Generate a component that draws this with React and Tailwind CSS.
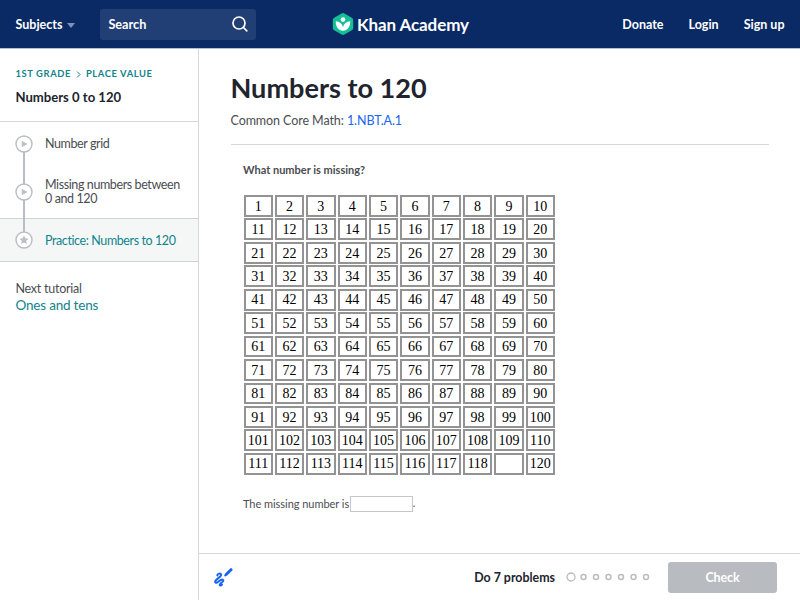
import React from 'react';

const numbers = Array.from({ length: 120 }, (_, i) => i + 1);
const MISSING = 119;

const lessons = [
  { title: 'Number grid', type: 'video', row: 'h-[43px]' },
  { title: 'Missing numbers between 0 and 120', type: 'video', row: 'h-[53px]' },
  { title: 'Practice: Numbers to 120', type: 'exercise', row: 'h-[44px]', active: true },
];

const Logo = () => (
  <svg width="22" height="24" viewBox="0 0 22 24" className="shrink-0">
    <path d="M9.6 1.4a2.8 2.8 0 0 1 2.8 0l7.4 4.3a2.8 2.8 0 0 1 1.4 2.4v7.8a2.8 2.8 0 0 1-1.4 2.4l-7.4 4.3a2.8 2.8 0 0 1-2.8 0l-7.4-4.3A2.8 2.8 0 0 1 .8 15.9V8.1a2.8 2.8 0 0 1 1.4-2.4z" fill="#14bf96" />
    <circle cx="11" cy="7.6" r="2.3" fill="#fff" />
    <path d="M18.200 9.300c-4 .3-6.300 2.600-7.200 5.700-.9-3.100-3.200-5.400-7.200-5.700-.3 5.300 2.600 9.400 7.200 9.400s7.500-4.100 7.200-9.400z" fill="#fff" />
  </svg>
);

const LessonIcon = ({ type }) => (
  <svg width="18" height="18" viewBox="0 0 18 18" className="block">
    <circle cx="9" cy="9" r="8" fill="#fff" stroke="#babec2" strokeWidth="1.400" />
    {type === 'video' ? (
      <path d="M7.200 6.500v5L11.800 9z" fill="#babec2" stroke="#babec2" strokeWidth="0.800" strokeLinejoin="round" />
    ) : (
      <path d="M9 5l1.200 2.600 2.800.3-2.100 1.900.6 2.800L9 11.200l-2.500 1.400.6-2.800L5 7.900l2.800-.3z" fill="#babec2" stroke="#babec2" strokeWidth="0.500" />
    )}
  </svg>
);

const Header = () => (
  <header className="flex h-[49px] shrink-0 items-center justify-between border-b border-[#b5bdd1] bg-[#0a2a66] text-white">
    <div className="flex w-[332px] items-center pl-[15.500px]">
      <span className="pt-[2px] text-[12.500px] font-bold">Subjects</span>
      <svg width="8" height="5" viewBox="0 0 8 5" className="ml-[5px] mt-0.5"><path d="M0 0h8L4 5z" fill="#7e93bb" /></svg>
      <div className="ml-[25px] flex h-[31px] w-[156px] items-center justify-between rounded-[3px] bg-[#223f75] px-2">
        <span className="pt-px text-[12.700px] font-bold">Search</span>
        <svg width="16" height="16" viewBox="0 0 16 16" fill="none" stroke="#fff" strokeWidth="1.700" strokeLinecap="round">
          <circle cx="7" cy="7" r="6" />
          <path d="M11.500 11.500l3.300 3.300" />
        </svg>
      </div>
    </div>
    <div className="flex flex-1 items-center gap-[3px]">
      <Logo />
      <span className="pt-px text-[17px] font-bold tracking-[-0.1px]">Khan Academy</span>
    </div>
    <nav className="flex gap-[25px] pr-[15.500px] pt-[2px] text-[12.500px] font-bold">
      <span>Donate</span>
      <span>Login</span>
      <span>Sign up</span>
    </nav>
  </header>
);

const Sidebar = () => (
  <aside className="w-[199px] shrink-0 border-r border-[#d6d8da] text-[#4a4d52]">
    <div className="h-[73px] border-b border-[#d6d8da] pl-[15.5px] pt-[18px]">
      <div className="flex items-center text-[9.400px] leading-[14px] font-bold tracking-[0.6px] text-[#11848c]">
        <span>1ST GRADE</span>
        <svg width="5" height="7" viewBox="0 0 5 7" className="mx-[5px]" fill="none" stroke="#11848c" strokeWidth="1"><path d="M1 .5l3 3-3 3" /></svg>
        <span>PLACE VALUE</span>
      </div>
      <h2 className="mt-[7px] text-[13.100px] leading-[18px] font-bold text-[#21242c]">Numbers 0 to 120</h2>
    </div>
    <ul className="relative">
      <li className="absolute left-[23px] top-[22px] h-[97px] w-[1.500px] bg-[#babec2]" />
      {lessons.map((lesson) => (
        <li
          key={lesson.title}
          className={`flex items-center pl-[15px] ${lesson.row} ${lesson.active ? 'border-y border-[#d0d3d3] bg-[#f5f7f7] text-[#11848c]' : ''}`}
        >
          <div className="relative"><LessonIcon type={lesson.type} /></div>
          <span className="ml-3 w-[142px] pt-px text-[12.500px] leading-[14px] tracking-[-0.400px]">{lesson.title}</span>
        </li>
      ))}
    </ul>
    <div className="pl-[15.5px] pt-[18px]">
      <p className="text-[12.500px] leading-[17px] tracking-[-0.250px]">Next tutorial</p>
      <p className="text-[13.500px] leading-[17px] tracking-[-0.200px] text-[#11848c]">Ones and tens</p>
    </div>
  </aside>
);

const NumberGrid = () => (
  <div className="ml-[0.500px] mt-[17px] grid w-[311.500px] grid-cols-10 gap-x-[2px] gap-y-[1.700px]">
    {numbers.map((n) => (
      <div
        key={n}
        className="flex h-[21.750px] items-center justify-center border-2 border-[#939393] pt-[1.500px] font-['Liberation_Serif',serif] text-[14px] leading-none text-black"
      >
        {n === MISSING ? '' : n}
      </div>
    ))}
  </div>
);

const Footer = () => (
  <footer className="flex h-[47px] shrink-0 items-center border-t border-[#d6d8da] pl-[14px] pr-[23px]">
    <svg width="20" height="20" viewBox="0 0 20 20" fill="none" stroke="#1865f2" strokeLinecap="round" strokeLinejoin="round">
      <path d="M18 2.700l-4.600 4.500" strokeWidth="3" />
      <path d="M12.900 7.700l-.8.800" strokeWidth="1.800" />
      <path d="M4.300 8.500C4.600 6.300 7.800 5.900 8.200 7.900 8.500 10 2 12.200 2.100 14.700c.3 2.200 2.500.8 3.800-.4 1.500-1.300 3.800-2.700 4.400-.9.500 1.800-4.200 3-3.600 4.700.5 1 1.700.3 2.300-.5" strokeWidth="2" />
    </svg>
    <div className="ml-auto flex items-center">
      <span className="pt-[2px] text-[12.400px] font-bold text-[#21242c]">Do 7 problems</span>
      <svg width="84" height="10" viewBox="0 0 84 10" className="ml-[11px]" fill="none" stroke="#babec2">
        <circle cx="5" cy="5" r="4" strokeWidth="1.300" />
        {[17.5, 30, 42.5, 55, 67.5, 80].map((cx) => (
          <circle key={cx} cx={cx} cy="5" r="2.500" strokeWidth="1.500" />
        ))}
      </svg>
      <button className="ml-[18px] h-[31px] w-[109px] rounded-[3px] bg-[#b8bbc0] pt-[2px] text-[12.500px] tracking-[-0.1px] font-bold text-white">Check</button>
    </div>
  </footer>
);

const App = () => {
  return (
    <div className="flex h-screen w-full flex-col overflow-hidden bg-white font-['Lato',sans-serif]">
      <Header />
      <div className="flex min-h-0 flex-1">
        <Sidebar />
        <div className="flex min-w-0 flex-1 flex-col">
          <main className="flex-1 px-[31.500px] pt-[21px] text-[#4a4d52]">
            <h1 className="text-[27.100px] leading-9 font-bold text-[#21242c]">Numbers to 120</h1>
            <p className="mt-[6px] text-[12.500px] leading-[18px] tracking-[-0.080px]">
              Common Core Math: <span className="text-[#1865f2]">1.NBT.A.1</span>
            </p>
            <div className="mt-[14px] border-t border-[#d6d8da] pl-[12.500px] pt-[17px]">
              <p className="text-[11px] leading-4 font-bold">What number is missing?</p>
              <NumberGrid />
              <div className="mt-[21px] flex h-4 items-center text-[11px]">
                <span className="pt-px tracking-[-0.040px]">The missing number is</span>
                <input className="ml-[1px] h-4 w-[62.500px] border border-[#c4c6c9]" />
                <span>.</span>
              </div>
            </div>
          </main>
          <Footer />
        </div>
      </div>
    </div>
  );
};

export default App;
